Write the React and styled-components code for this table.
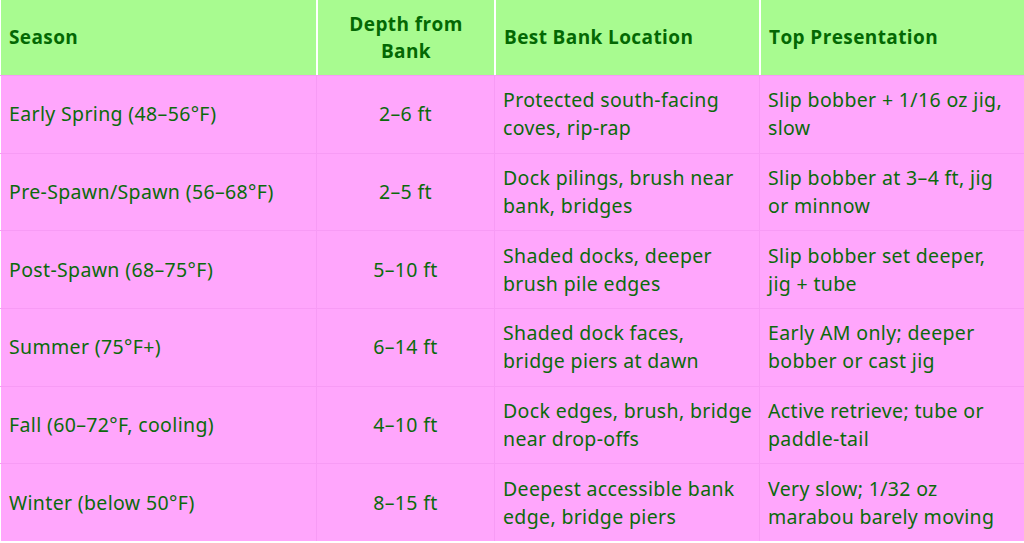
import React from 'react'
import styled, { createGlobalStyle } from 'styled-components'

const GlobalStyle = createGlobalStyle`
  html, body { margin: 0; padding: 0; background: #ffffff; }
`

// line breaks follow the source layout
const rows = [
    ['Early Spring (48–56°F)', '2–6 ft', 'Protected south-facing\ncoves, rip-rap', 'Slip bobber + 1/16 oz jig,\nslow'],
    ['Pre-Spawn/Spawn (56–68°F)', '2–5 ft', 'Dock pilings, brush near\nbank, bridges', 'Slip bobber at 3–4 ft, jig\nor minnow'],
    ['Post-Spawn (68–75°F)', '5–10 ft', 'Shaded docks, deeper\nbrush pile edges', 'Slip bobber set deeper,\njig + tube'],
    ['Summer (75°F+)', '6–14 ft', 'Shaded dock faces,\nbridge piers at dawn', 'Early AM only; deeper\nbobber or cast jig'],
    ['Fall (60–72°F, cooling)', '4–10 ft', 'Dock edges, brush, bridge\nnear drop-offs', 'Active retrieve; tube or\npaddle-tail'],
    ['Winter (below 50°F)', '8–15 ft', 'Deepest accessible bank\nedge, bridge piers', 'Very slow; 1/32 oz\nmarabou barely moving'],
]

const headers = ['Season', 'Depth from\nBank', 'Best Bank Location', 'Top Presentation']

const App = () => {
    return <Wrapper>
        <GlobalStyle />
        <Table>
            <Row $head>
                {headers.map((h, i) => <HeadCell key={h} $center={i === 1} $col={i}>{h}</HeadCell>)}
            </Row>
            {rows.map(r => <Row key={r[0]}>
                {r.map((c, i) => <Cell key={i} $center={i === 1} $col={i}>{c}</Cell>)}
            </Row>)}
        </Table>
    </Wrapper>
}

const Wrapper = styled.div`
  width: 1024px;
  height: 543px;
  background: #ffffff;
`

const Table = styled.div`
  display: flex;
  flex-direction: column;
  width: 1024px;
  height: 541px;
`

const Row = styled.div`
  display: grid;
  grid-template-columns: 316px 178px 265px 265px;
  height: ${p => p.$head ? '75px' : '77.67px'};
  background: ${p => p.$head ? '#a8fb90' : '#ffa6fc'};
  border-top: ${p => p.$head ? 'none' : '1px solid #f79bf5'};
  box-sizing: border-box;
`

const padFor = col => col === 1 ? '0 6px' : '0 0 0 8px'

const HeadCell = styled.div`
  display: flex;
  align-items: center;
  justify-content: ${p => p.$center ? 'center' : 'flex-start'};
  text-align: ${p => p.$center ? 'center' : 'left'};
  white-space: pre-line;
  padding: ${p => padFor(p.$col)};
  border-left: ${p => p.$col === 0 ? '1px' : '2px'} solid #ffffff;
  box-sizing: border-box;
  font-family: "Open Sans", "Noto Sans", sans-serif;
  font-weight: 700;
  font-size: 19px;
  letter-spacing: 0.4px;
  line-height: 27px;
  color: #036803;
`

const Cell = styled.div`
  display: flex;
  align-items: center;
  justify-content: ${p => p.$center ? 'center' : 'flex-start'};
  text-align: ${p => p.$center ? 'center' : 'left'};
  white-space: pre;
  padding: ${p => padFor(p.$col)};
  border-left: 1px solid ${p => p.$col === 0 ? '#ffffff' : '#f79bf5'};
  box-sizing: border-box;
  font-family: "Noto Sans", "Open Sans", sans-serif;
  font-size: 19.5px;
  letter-spacing: 0.35px;
  line-height: 28px;
  color: #0b6a0b;
`

export default App
